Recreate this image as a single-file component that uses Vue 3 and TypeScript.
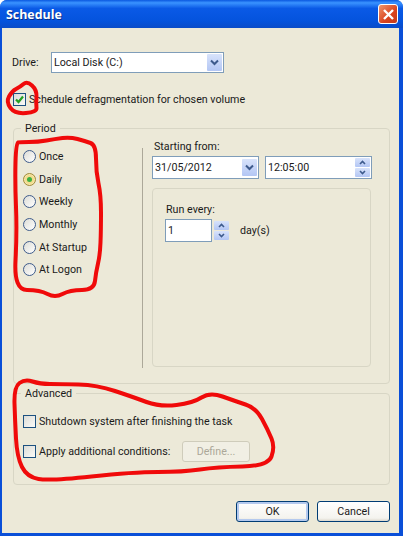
<script setup lang="ts">
const periods = ['Once', 'Daily', 'Weekly', 'Monthly', 'At Startup', 'At Logon']

// hand-drawn red outlines, traced as points and rounded through midpoints
const outlines: [number, number][][] = [
  [[16, 143], [20, 142], [38, 142], [55, 139], [70, 137], [85, 141], [96, 145], [96, 172], [101, 195], [101, 230], [100, 255], [96, 272], [94, 290], [70, 290], [55, 298], [40, 290], [14, 290], [17, 232], [15, 182]],
  [[14, 387], [25, 379], [40, 384], [60, 384], [97, 385], [133, 397], [160, 407], [193, 403], [210, 392], [235, 401], [256, 408], [268, 430], [275, 447], [268, 466], [217, 467], [183, 472], [133, 472], [50, 481], [27, 477], [17, 457], [15, 420]],
  [[27, 81], [37, 90], [36, 104], [37, 112], [15, 114], [6, 102], [12, 91], [20, 87]],
]

function smooth(pts: [number, number][]): string {
  const mid = (a: [number, number], b: [number, number]) => `${(a[0] + b[0]) / 2} ${(a[1] + b[1]) / 2}`
  let d = `M${mid(pts[pts.length - 1], pts[0])}`
  pts.forEach((p, i) => {
    d += ` Q${p[0]} ${p[1]} ${mid(p, pts[(i + 1) % pts.length])}`
  })
  return d + ' Z'
}

const scribbles = outlines.map(smooth)
</script>

<template>
  <div class="window">
    <div class="titlebar">
      <span class="title">Schedule</span>
      <button class="close" aria-label="Close">
        <svg width="13" height="13" viewBox="0 0 13 13">
          <path d="M2 2 L11 11 M11 2 L2 11" stroke="#fff" stroke-width="2.4" fill="none" />
        </svg>
      </button>
    </div>

    <div class="body">
      <div class="drive-row">
        <span class="drive-label">Drive:</span>
        <div class="field drive-field">
          <span class="field-value">Local Disk (C:)</span>
          <span class="drop">
            <svg width="9" height="7" viewBox="0 0 9 7"><path d="M1 1.5 L4.5 5 L8 1.5" stroke="#3d5a8c" stroke-width="2" fill="none" /></svg>
          </span>
        </div>
      </div>

      <label class="check main-check">
        <span class="box">
          <svg width="11" height="11" viewBox="0 0 11 11"><path d="M2 5.5 L4.5 8 L9 2.5" stroke="#21a121" stroke-width="2.2" fill="none" /></svg>
        </span>
        Schedule defragmentation for chosen volume
      </label>

      <fieldset class="group period">
        <legend>Period</legend>
        <div class="radios">
          <label v-for="p in periods" :key="p" class="radio-row">
            <span class="radio" :class="{ 'radio--on': p === 'Daily' }"></span>
            {{ p }}
          </label>
        </div>
        <div class="schedule">
          <div class="starting-label">Starting from:</div>
          <div class="starting-row">
            <div class="field date-field">
              <span class="field-value">31/05/2012</span>
              <span class="drop">
                <svg width="9" height="7" viewBox="0 0 9 7"><path d="M1 1.5 L4.5 5 L8 1.5" stroke="#3d5a8c" stroke-width="2" fill="none" /></svg>
              </span>
            </div>
            <div class="field time-field">
              <span class="field-value">12:05:00</span>
              <span class="spin">
                <span class="spin-btn"><svg width="7" height="5" viewBox="0 0 7 5"><path d="M1 4 L3.5 1.5 L6 4" stroke="#3d5a8c" stroke-width="1.6" fill="none" /></svg></span>
                <span class="spin-btn"><svg width="7" height="5" viewBox="0 0 7 5"><path d="M1 1 L3.5 3.5 L6 1" stroke="#3d5a8c" stroke-width="1.6" fill="none" /></svg></span>
              </span>
            </div>
          </div>
          <div class="run-panel">
            <div class="run-label">Run every:</div>
            <div class="run-row">
              <div class="field run-field"><span class="field-value">1</span></div>
              <span class="spin run-spin">
                <span class="spin-btn"><svg width="7" height="5" viewBox="0 0 7 5"><path d="M1 4 L3.5 1.5 L6 4" stroke="#3d5a8c" stroke-width="1.6" fill="none" /></svg></span>
                <span class="spin-btn"><svg width="7" height="5" viewBox="0 0 7 5"><path d="M1 1 L3.5 3.5 L6 1" stroke="#3d5a8c" stroke-width="1.6" fill="none" /></svg></span>
              </span>
              <span class="unit">day(s)</span>
            </div>
          </div>
        </div>
      </fieldset>

      <fieldset class="group advanced">
        <legend>Advanced</legend>
        <label class="check">
          <span class="box"></span>
          Shutdown system after finishing the task
        </label>
        <div class="conditions">
          <label class="check conditions-check">
            <span class="box"></span>
            Apply additional conditions:
          </label>
          <button class="btn define" disabled>Define...</button>
        </div>
      </fieldset>

      <div class="actions">
        <button class="btn btn--default">OK</button>
        <button class="btn">Cancel</button>
      </div>
    </div>

    <svg class="scribbles" width="403" height="536" viewBox="0 0 403 536">
      <path
        v-for="d in scribbles"
        :key="d"
        :d="d"
        fill="none"
        stroke="#f00a0a"
        stroke-width="4"
        stroke-linejoin="round"
      />
    </svg>
  </div>
</template>

<style>
html,
body {
  margin: 0;
  background: #fff;
}
</style>

<style scoped>
.window {
  position: relative;
  width: 403px;
  height: 536px;
  display: flex;
  flex-direction: column;
  background: #0a4fd8;
  font-family: Roboto, sans-serif;
  font-size: 10.7px;
  line-height: 13px;
  color: #1a1a1a;
  border-radius: 7px 7px 0 0;
  overflow: hidden;
}

.titlebar {
  height: 28px;
  flex-shrink: 0;
  display: flex;
  align-items: center;
  justify-content: space-between;
  padding: 0 5px 0 6px;
  background: linear-gradient(#0a58e0 0%, #3a93ff 10%, #0a5ae6 30%, #0453dd 75%, #0a4cc8 100%);
}

.title {
  color: #fff;
  font-family: "Open Sans", sans-serif;
  font-weight: 700;
  font-size: 12.4px;
  text-shadow: 1px 1px 0 #0a2f8a;
}

.close {
  width: 20px;
  height: 20px;
  padding: 0;
  display: flex;
  align-items: center;
  justify-content: center;
  border: 1px solid #fff;
  border-radius: 3px;
  background: linear-gradient(135deg, #f0966c, #d9431f 60%, #c23a1a);
}

.body {
  flex: 1;
  min-height: 0;
  margin: 0 4px 3px 2px;
  padding: 0 9px 0 11px;
  background: #ece9d8;
  display: flex;
  flex-direction: column;
}

.drive-row {
  display: flex;
  align-items: center;
  margin: 24px 0 0 -1px;
}

.drive-label {
  width: 39px;
}

.field {
  box-sizing: border-box;
  display: flex;
  align-items: center;
  justify-content: space-between;
  background: #fff;
  border: 1px solid #7f9db9;
  padding: 1px;
}

.field-value {
  padding-left: 1px;
}

.drive-field {
  width: 173px;
  height: 21px;
}

.drop {
  width: 15px;
  height: 17px;
  display: flex;
  align-items: center;
  justify-content: center;
  background: linear-gradient(#d8e3fb, #b3c6f4);
  border-radius: 1px;
}

.check {
  display: flex;
  align-items: center;
  gap: 3px;
}

.main-check {
  margin-top: 20px;
}

.box {
  box-sizing: border-box;
  width: 13px;
  height: 13px;
  flex-shrink: 0;
  display: flex;
  align-items: center;
  justify-content: center;
  background: linear-gradient(135deg, #dcdcd6, #fbfbf8);
  border: 1px solid #1c5180;
}

.group {
  margin: 0;
  min-width: 0;
  border: 1px solid #d8d6c5;
  border-radius: 4px;
}

.group legend {
  padding: 0 4px;
  margin-left: -2px;
}

.period {
  box-sizing: border-box;
  height: 262px;
  margin-top: 16px;
  padding: 0 17px 0 9px;
  display: flex;
}

.radios {
  width: 120px;
  flex-shrink: 0;
  display: flex;
  flex-direction: column;
  margin-top: 13px;
  border-right: 1px solid #aca899;
  height: 220px;
  box-sizing: border-box;
}

.radio-row {
  display: flex;
  align-items: center;
  gap: 3px;
  height: 22.7px;
}

.radio-row:first-child {
  margin-top: -3px;
}

.radio {
  box-sizing: border-box;
  width: 13px;
  height: 13px;
  border-radius: 50%;
  border: 1px solid #3f5c8c;
  background: linear-gradient(135deg, #dcdcd6, #fff);
  flex-shrink: 0;
  display: flex;
  align-items: center;
  justify-content: center;
}

.radio--on {
  border-color: #a08a3c;
  background: #f3dc8c;
  box-shadow: inset 0 0 0 1px #f6e7ae;
}

.radio--on::after {
  content: "";
  width: 5px;
  height: 5px;
  border-radius: 50%;
  background: #3cb044;
}

.schedule {
  margin-left: 9px;
  flex: 1;
  min-width: 0;
  display: flex;
  flex-direction: column;
}

.starting-label {
  margin-top: 5px;
  padding-left: 2px;
}

.starting-row {
  display: flex;
  justify-content: space-between;
  margin-top: 3px;
}

.date-field,
.time-field {
  width: 107px;
  height: 23px;
}

.spin {
  width: 15px;
  display: flex;
  flex-direction: column;
  gap: 1px;
}

.spin-btn {
  height: 9px;
  display: flex;
  align-items: center;
  justify-content: center;
  background: linear-gradient(#d8e3fb, #b3c6f4);
  border-radius: 1px;
}

.run-panel {
  box-sizing: border-box;
  width: 219px;
  height: 179px;
  margin-top: 9px;
  padding: 14px 12px;
  border: 1px solid #d8d6c5;
  border-radius: 4px;
}

.run-label {
  padding-left: 1px;
}

.run-row {
  display: flex;
  align-items: center;
  margin-top: 3px;
}

.run-field {
  width: 47px;
  height: 23px;
}

.run-spin {
  margin-left: 2px;
}

.unit {
  margin-left: 11px;
}

.advanced {
  box-sizing: border-box;
  height: 98px;
  margin-top: 3px;
  padding: 15px 0 0 9px;
  display: flex;
  flex-direction: column;
  gap: 13px;
}

.conditions {
  display: flex;
  align-items: center;
}

.conditions-check {
  width: 159px;
}

.btn {
  box-sizing: border-box;
  width: 73px;
  height: 21px;
  padding: 0;
  font: inherit;
  color: #1a1a1a;
  background: linear-gradient(#fff, #f4f3ee 85%, #dcd8cc);
  border: 1px solid #003c74;
  border-radius: 3px;
}

.btn--default {
  box-shadow: inset 0 0 0 2px #b4c9ee;
}

.define {
  width: 68px;
  height: 21px;
  color: #aca899;
  background: #f1efe4;
  border-color: #cfccbb;
}

.actions {
  display: flex;
  justify-content: flex-end;
  gap: 8px;
  margin-top: 16px;
}

.scribbles {
  position: absolute;
  top: 0;
  left: 0;
  pointer-events: none;
}
</style>
